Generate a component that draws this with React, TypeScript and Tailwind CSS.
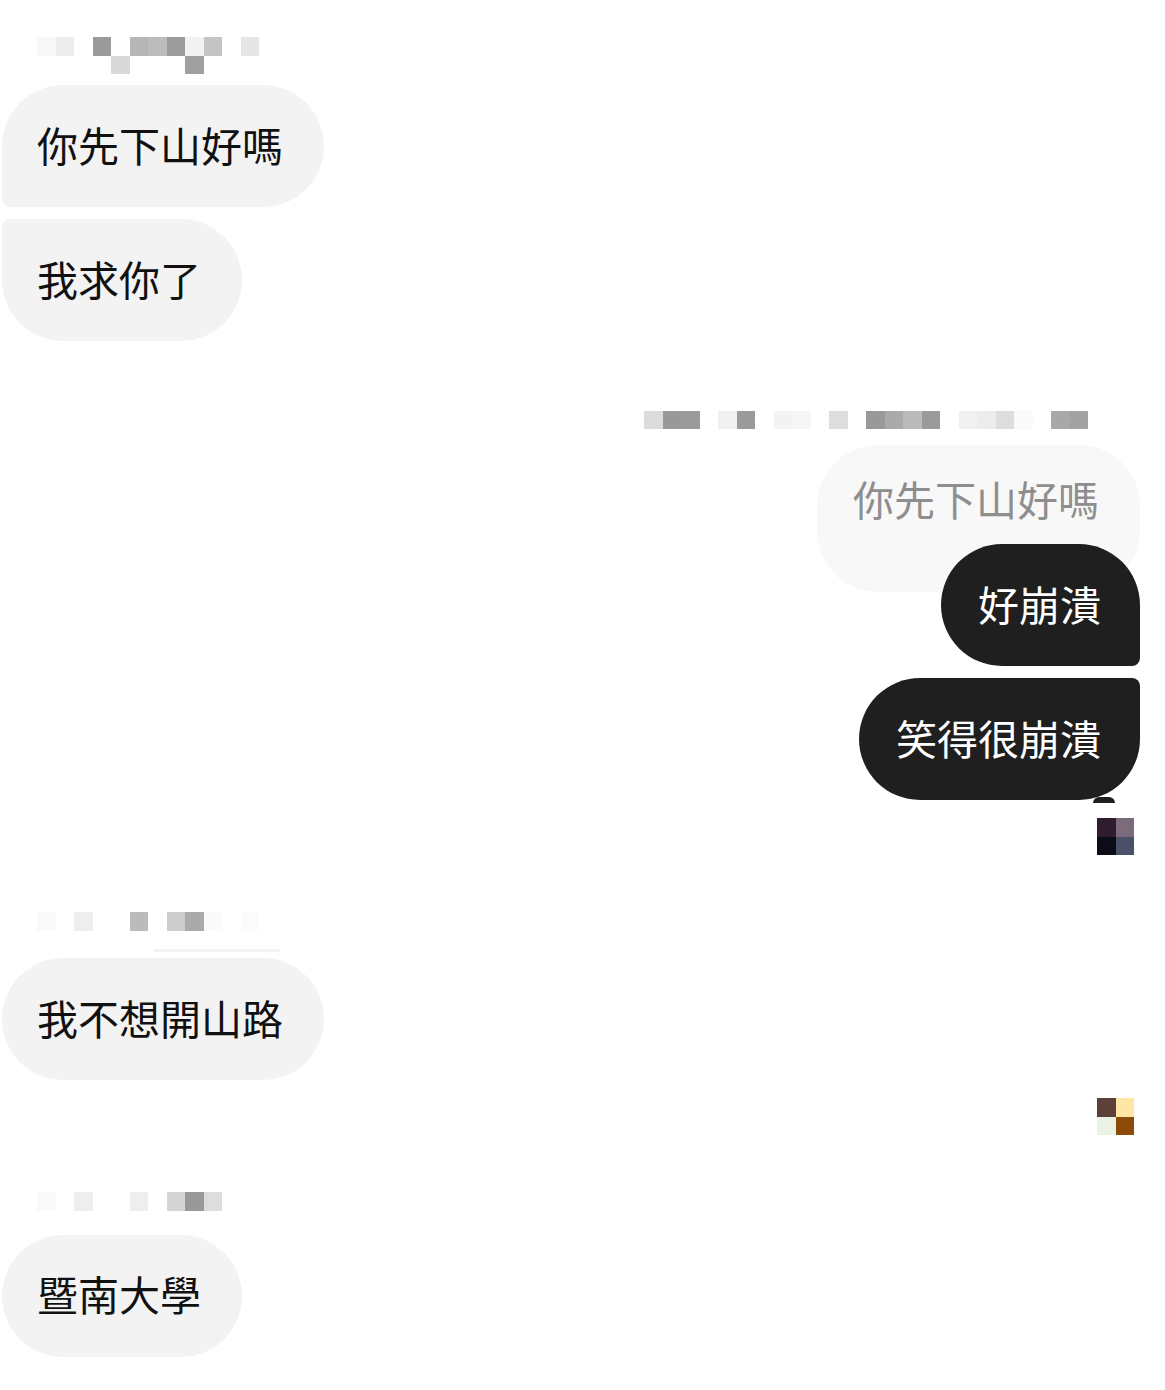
import React from 'react';

const FONT = { fontFamily: '"Noto Sans CJK TC", "Noto Sans CJK SC", sans-serif' };

// pixelated names / avatars, one colour per cell ('' = blank)
const NAME_TOP = [
  ['#f8f8f8', '#ececec', '', '#9a9a9a', '', '#b6b6b6', '#bcbcbc', '#9c9c9c', '#f2f2f2', '#c4c4c4', '', '#e5e5e5'],
  ['', '', '', '', '#d9d9d9', '', '', '', '#a0a0a0', '', '', ''],
];

const NAME_ME = [
  ['', '', '', '', '', '', '', '', '', '', '', '', '', '', '', '', '', '', '', '', '', '', '', ''],
  [
    '#dcdcdc', '#999999', '#9b9b9b', '', '#f0f0f0', '#9a9a9a', '', '#f3f3f3', '#f6f6f6', '', '#dddddd', '',
    '#999999', '#aaaaaa', '#bbbbbb', '#9a9a9a', '', '#f0f0f0', '#ececec', '#dddddd', '#fafafa', '', '#a8a8a8',
    '#a2a2a2',
  ],
];

const NAME_MID = [
  ['#fafafa', '', '#eeeeee', '', '', '#bbbbbb', '', '#cccccc', '#aaaaaa', '#fafafa', '', '#fbfbfb'],
  ['', '', '', '', '', '', '', '', '', '', '', ''],
];

const NAME_LAST = [['#fafafa', '', '#eeeeee', '', '', '#eeeeee', '', '#d5d5d5', '#999999', '#dddddd']];

const AVATAR_A = [
  ['#2f1c2f', '#7b6b7b'],
  ['#0d0b18', '#4a5068'],
];

const AVATAR_B = [
  ['#5b4139', '#ffe5a6'],
  ['#eaf2e3', '#8b4a08'],
];

const Pixels = ({ rows, className = '' }: { rows: string[][]; className?: string }) => (
  <div className={`flex flex-col ${className}`}>
    {rows.map((row, i) => (
      <div key={i} className="flex">
        {row.map((c, j) => (
          <div key={j} className="h-[18.5px] w-[18.5px]" style={{ backgroundColor: c || 'transparent' }} />
        ))}
      </div>
    ))}
  </div>
);

const TheirBubble = ({ text, className = '' }: { text: string; className?: string }) => (
  <div
    className={`ml-[2px] flex h-[122px] w-fit items-center bg-[#f3f3f3] pb-[4px] pl-[35px] pr-[41px] text-[41px] leading-none text-[#111] ${className}`}
  >
    {text}
  </div>
);

const MyBubble = ({ text, className = '', children }: { text: string; className?: string; children?: React.ReactNode }) => (
  <div
    className={`relative z-10 flex h-[122px] w-fit items-center bg-[#1f1f1f] pb-[4px] pl-[37px] pr-[39px] text-[41px] leading-none text-white ${className}`}
  >
    {text}
    {children}
  </div>
);

export default function App() {
  return (
    <div className="min-h-[1390px] w-full overflow-hidden bg-white pb-[34px]" style={FONT}>
      <div className="flex flex-col">
        {/* first sender */}
        <Pixels rows={NAME_TOP} className="ml-[37px] mt-[37px]" />
        <TheirBubble text="你先下山好嗎" className="mt-[11px] rounded-[61px] rounded-bl-[8px]" />
        <TheirBubble text="我求你了" className="mt-[12px] rounded-[61px] rounded-tl-[8px]" />

        {/* my reply */}
        <div className="flex flex-col items-end pr-[25px]">
          <Pixels rows={NAME_ME} className="mr-[52px] mt-[51px]" />
          <div className="mt-[16px] h-[147px] rounded-[61px] bg-[#f8f8f8] pl-[36px] pr-[41px] pt-[25px] text-[41px] leading-[1.4] text-[#8e8e8e]">
            你先下山好嗎
          </div>
          <MyBubble text="好崩潰" className="-mt-[48px] rounded-[61px] rounded-br-[8px]" />
          <MyBubble text="笑得很崩潰" className="mt-[12px] rounded-[61px] rounded-tr-[8px]">
            <span className="absolute -bottom-[3px] right-[25px] h-[6px] w-[22px] rounded-t-full bg-[#1f1f1f]" />
          </MyBubble>
          <Pixels rows={AVATAR_A} className="mr-[6px] mt-[18px]" />
        </div>

        {/* second sender */}
        <Pixels rows={NAME_MID} className="ml-[37px] mt-[57px]" />
        <div className="ml-[153px] h-[3px] w-[127px] rounded-full bg-[#f3f3f3]" />
        <TheirBubble text="我不想開山路" className="mt-[6px] rounded-[61px]" />

        <div className="flex justify-end pr-[25px]">
          <Pixels rows={AVATAR_B} className="mr-[6px] mt-[18px]" />
        </div>

        <Pixels rows={NAME_LAST} className="ml-[37px] mt-[57px]" />
        <TheirBubble text="暨南大學" className="mt-[24px] rounded-[61px]" />
      </div>
    </div>
  );
}
